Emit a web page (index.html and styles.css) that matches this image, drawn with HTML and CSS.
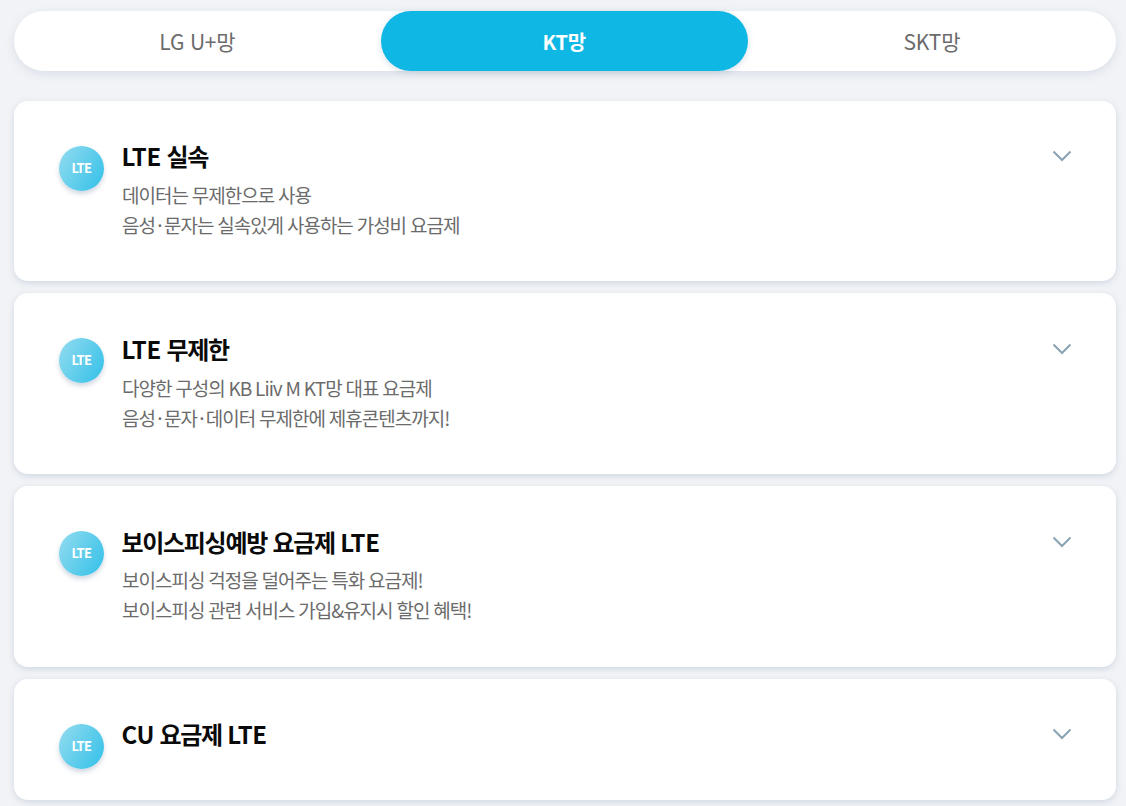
FILE: index.html
```html
<!DOCTYPE html>
<html lang="ko">
<head>
<meta charset="utf-8">
<title>요금제</title>
<link rel="stylesheet" href="styles.css">
</head>
<body>
<main class="page">
  <nav class="tabs">
    <div class="tab">LG U+망</div>
    <div class="tab tab-active">KT망</div>
    <div class="tab">SKT망</div>
  </nav>
  <section class="cards">
    <article class="card">
      <div class="badge">LTE</div>
      <div class="card-body">
        <h2 class="card-title"><span class="latin">LTE</span> 실속</h2>
        <p class="card-desc">데이터는 무제한으로 사용<br>음성<span class="dot"> · </span>문자는 실속있게 사용하는 가성비 요금제</p>
      </div>
      <svg class="chevron" viewBox="0 0 20 12" width="20" height="12"><path d="M1.5 1.5 10 10l8.5-8.5" /></svg>
    </article>
    <article class="card">
      <div class="badge">LTE</div>
      <div class="card-body">
        <h2 class="card-title"><span class="latin">LTE</span> 무제한</h2>
        <p class="card-desc">다양한 구성의 KB Liiv M KT망 대표 요금제<br>음성<span class="dot"> · </span>문자<span class="dot"> · </span>데이터 무제한에 제휴콘텐츠까지!</p>
      </div>
      <svg class="chevron" viewBox="0 0 20 12" width="20" height="12"><path d="M1.5 1.5 10 10l8.5-8.5" /></svg>
    </article>
    <article class="card">
      <div class="badge">LTE</div>
      <div class="card-body">
        <h2 class="card-title">보이스피싱예방 요금제 <span class="latin">LTE</span></h2>
        <p class="card-desc">보이스피싱 걱정을 덜어주는 특화 요금제!<br>보이스피싱 관련 서비스 가입&amp;유지시 할인 혜택!</p>
      </div>
      <svg class="chevron" viewBox="0 0 20 12" width="20" height="12"><path d="M1.5 1.5 10 10l8.5-8.5" /></svg>
    </article>
    <article class="card card-short">
      <div class="badge">LTE</div>
      <div class="card-body">
        <h2 class="card-title"><span class="latin">CU</span> 요금제 <span class="latin">LTE</span></h2>
      </div>
      <svg class="chevron" viewBox="0 0 20 12" width="20" height="12"><path d="M1.5 1.5 10 10l8.5-8.5" /></svg>
    </article>
  </section>
</main>
</body>
</html>
```
FILE: styles.css
```css
* { box-sizing: border-box; }
html, body { margin: 0; padding: 0; }
body {
  background: #f1f3f6;
  font-family: "Noto Sans CJK KR", "Noto Sans", sans-serif;
  height: 806px;
  overflow: hidden;
}
.page { padding: 11px 10px 0 14px; }
.tabs {
  display: flex;
  height: 60px;
  background: #fff;
  border-radius: 30px;
  box-shadow: 0 3px 8px rgba(150, 165, 190, 0.25);
}
.tab {
  flex: 1;
  display: flex;
  align-items: center;
  justify-content: center;
  border-radius: 30px;
  font-size: 21px;
  color: #6b6b6b;
  letter-spacing: -0.2px;
  font-weight: 400;
}
.tab:first-child { flex: 0 0 366.8px; }
.tab-active {
  flex: 0 0 367px;
  background: #0fb7e4;
  color: #fff;
  font-size: 20px;
  font-weight: 700;
  box-shadow: 0 2px 6px rgba(150, 165, 190, 0.35);
}
.cards {
  margin-top: 29.5px;
  display: flex;
  flex-direction: column;
  gap: 12px;
}
.card {
  display: flex;
  align-items: flex-start;
  height: 180.8px;
  padding: 39.5px 44px 0 45px;
  background: #fff;
  border-radius: 14px;
  box-shadow: 0 2px 6px rgba(150, 165, 190, 0.35);
}
.card-short { height: 121px; }
.badge {
  flex: none;
  width: 45px;
  height: 45px;
  margin-top: 5.5px;
  padding-bottom: 2px;
  border-radius: 50%;
  background: linear-gradient(120deg, #94dcef, #32c0e8);
  box-shadow: 0 3px 5px rgba(120, 140, 170, 0.35);
  color: #fff;
  font-size: 13px;
  font-weight: 700;
  letter-spacing: -0.6px;
  display: flex;
  align-items: center;
  justify-content: center;
}
.card-body { flex: 1; margin-left: 18px; }
.card-title {
  margin: 0 0 0 -0.5px;
  font-size: 24px;
  line-height: 32px;
  font-weight: 700;
  color: #0a0a0a;
  letter-spacing: -1.3px;
}
.latin { letter-spacing: -0.3px; }
.card-desc {
  margin: 7.8px 0 0;
  font-size: 19px;
  line-height: 30px;
  font-weight: 400;
  color: #6b6b6b;
  letter-spacing: -1px;
  word-spacing: -0.5px;
}
.dot { word-spacing: -2px; }
.chevron {
  flex: none;
  margin-top: 10px;
  fill: none;
  stroke: #8aa3b3;
  stroke-width: 2;
}
```
